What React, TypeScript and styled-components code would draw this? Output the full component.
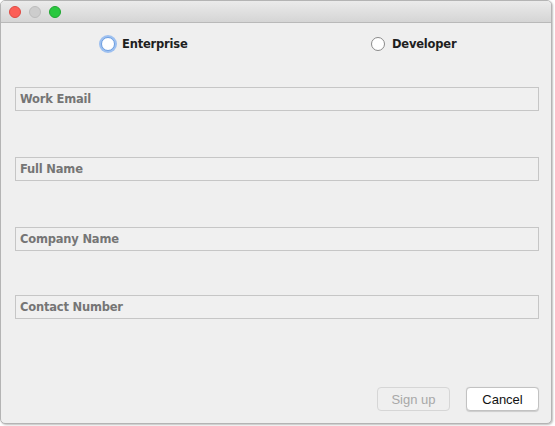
import React from 'react'
import styled, { createGlobalStyle } from 'styled-components'

const Global = createGlobalStyle`
  html, body {
    margin: 0;
    padding: 0;
    background: #ffffff;
    width: 555px;
    height: 426px;
    overflow: hidden;
  }
`

const Window = styled.div`
  width: 552px;
  height: 424px;
  box-sizing: border-box;
  border: 1px solid #b4b4b4;
  border-radius: 5px;
  background: #efefef;
  overflow: hidden;
  display: flex;
  flex-direction: column;
  box-shadow: 1px 1px 2px rgba(0, 0, 0, 0.25);
`

const TitleBar = styled.div`
  height: 21px;
  flex: none;
  background: linear-gradient(#ebebeb, #d5d5d5);
  border-bottom: 1px solid #b9b9b9;
  display: flex;
  align-items: center;
  gap: 8px;
  padding-left: 8px;
`

const Light = styled.span<{ $color: string; $edge: string }>`
  width: 12px;
  height: 12px;
  border-radius: 50%;
  box-sizing: border-box;
  background: ${(p) => p.$color};
  border: 0.5px solid ${(p) => p.$edge};
`

const Content = styled.div`
  flex: 1;
  display: flex;
  flex-direction: column;
  padding: 12px 12px 12px 14px;
  font-family: 'DejaVu Sans', Verdana, sans-serif;
`

const RadioRow = styled.div`
  display: grid;
  grid-template-columns: 270px auto;
  height: 18px;
  padding-left: 86px;
  margin-bottom: 34px;
`

const RadioOption = styled.label`
  display: flex;
  align-items: center;
  gap: 7px;
  font-size: 11.5px;
  font-weight: 700;
  color: #1e1e1e;
  letter-spacing: -0.2px;
`

const RadioCircle = styled.span<{ $focused?: boolean }>`
  width: 14px;
  height: 14px;
  box-sizing: border-box;
  border-radius: 50%;
  background: #ffffff;
  border: 1px solid ${(p) => (p.$focused ? '#6a9de0' : '#8a8a8a')};
  box-shadow: ${(p) => (p.$focused ? '0 0 0 2px #9dc0f0' : 'none')};
`

const Fields = styled.div`
  display: flex;
  flex-direction: column;
  gap: 46px;
`

const Field = styled.div`
  height: 24px;
  box-sizing: border-box;
  border: 1px solid #c6c6c6;
  background: #f0f0f0;
  display: flex;
  align-items: center;
  padding-left: 4px;
  font-size: 11.5px;
  font-weight: 700;
  color: #757575;
  letter-spacing: -0.2px;

  &:last-child {
    margin-top: -2px;
  }
`

const Footer = styled.div`
  margin-top: auto;
  display: flex;
  justify-content: flex-end;
  gap: 16px;
`

const Button = styled.div<{ $disabled?: boolean }>`
  width: 73px;
  height: 24px;
  box-sizing: border-box;
  border-radius: 4px;
  display: flex;
  align-items: center;
  justify-content: center;
  font-family: 'Liberation Sans', Arial, sans-serif;
  font-size: 13px;
  background: ${(p) => (p.$disabled ? '#efefef' : '#ffffff')};
  border: 1px solid ${(p) => (p.$disabled ? '#d6d6d6' : '#c2c2c2')};
  color: ${(p) => (p.$disabled ? '#a8a8a8' : '#111111')};
  box-shadow: ${(p) => (p.$disabled ? 'none' : '0 0.5px 1px rgba(0,0,0,0.15)')};
`

const fields = ['Work Email', 'Full Name', 'Company Name', 'Contact Number']

export default function App() {
  return (
    <>
      <Global />
      <Window>
        <TitleBar>
          <Light $color="#fc5f57" $edge="#de4a43" />
          <Light $color="#cdcdcd" $edge="#bcbcbc" />
          <Light $color="#2ac840" $edge="#1fa631" />
        </TitleBar>
        <Content>
          <RadioRow>
            <RadioOption>
              <RadioCircle $focused />
              Enterprise
            </RadioOption>
            <RadioOption>
              <RadioCircle />
              Developer
            </RadioOption>
          </RadioRow>
          <Fields>
            {fields.map((f) => (
              <Field key={f}>{f}</Field>
            ))}
          </Fields>
          <Footer>
            <Button $disabled>Sign up</Button>
            <Button>Cancel</Button>
          </Footer>
        </Content>
      </Window>
    </>
  )
}
